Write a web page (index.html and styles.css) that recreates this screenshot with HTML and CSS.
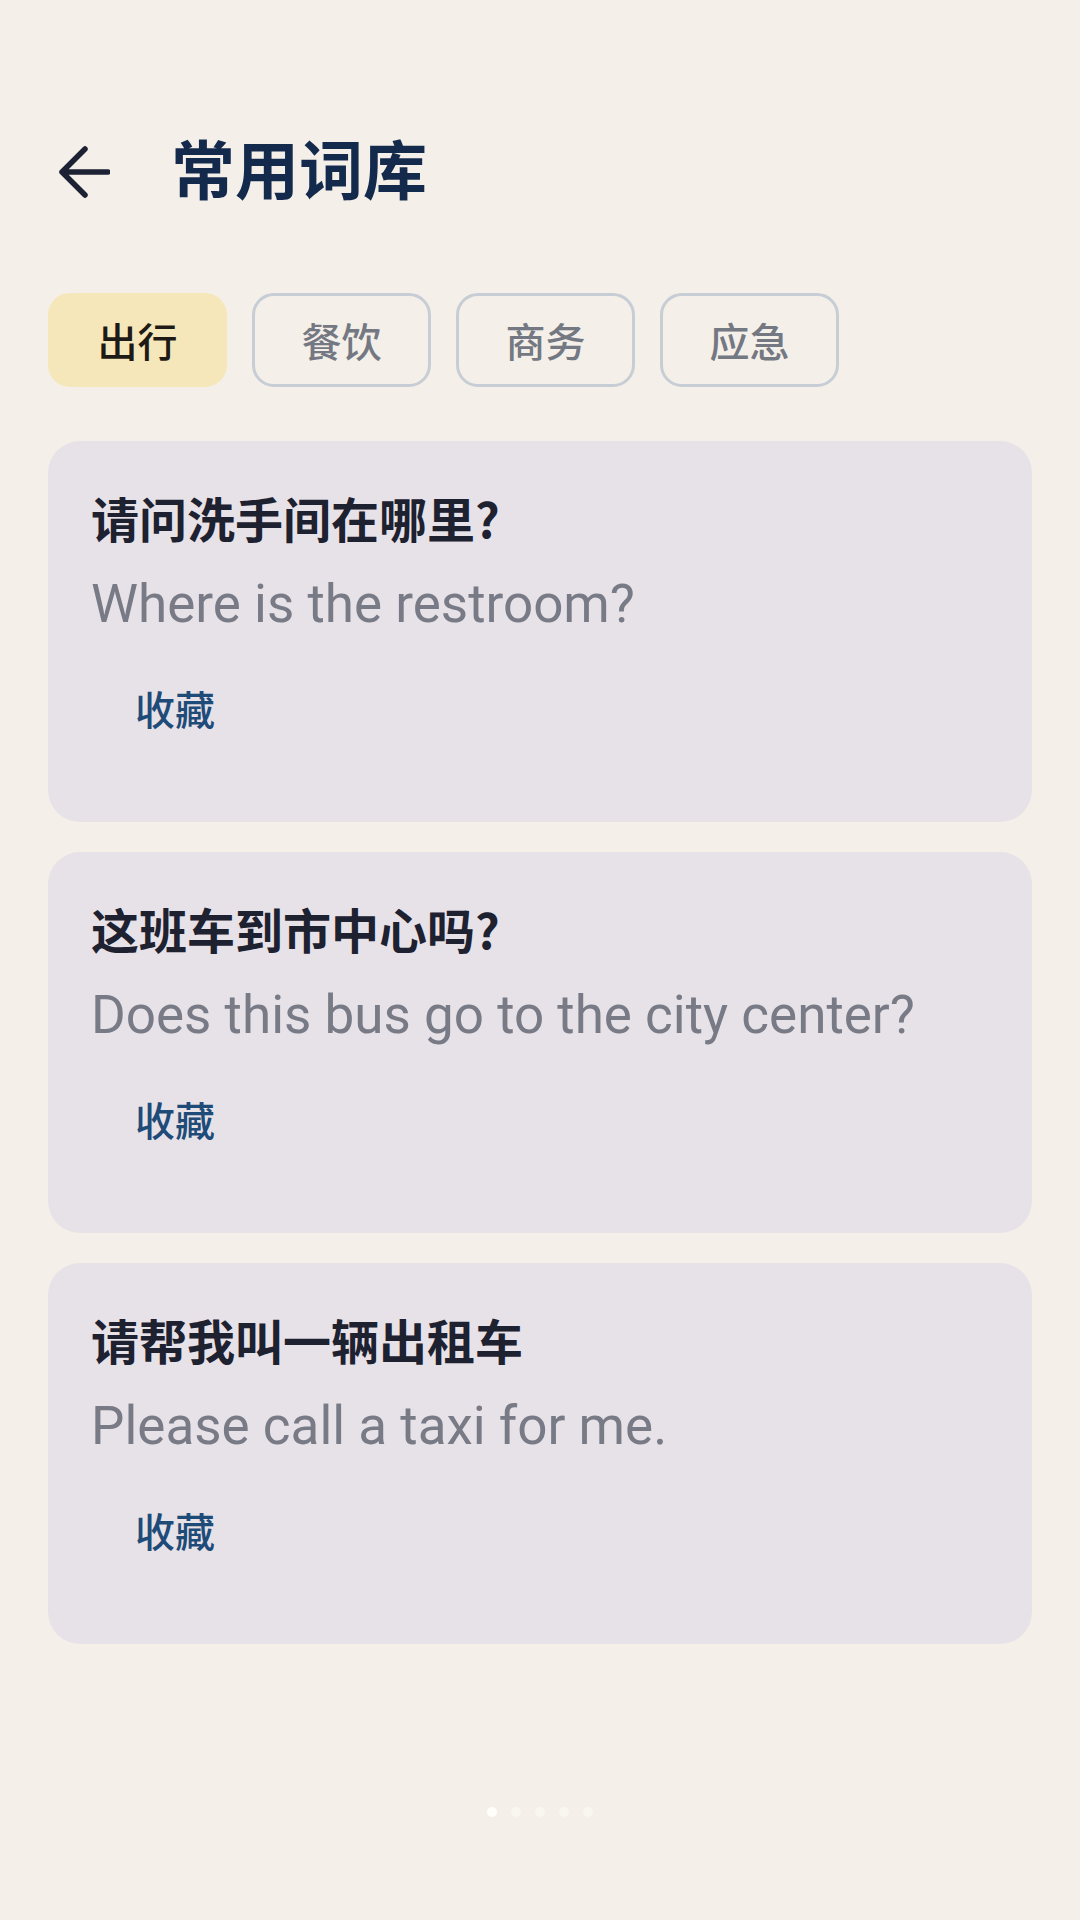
FILE: index.html
```html
<!DOCTYPE html>
<html lang="zh-CN">
<head>
    <meta charset="UTF-8">
    <meta name="viewport" content="width=device-width, initial-scale=1.0">
    <title>常用词库</title>
    <link rel="stylesheet" href="styles.css">
</head>
<body>
    <div class="page">
        <header class="top-bar">
            <button class="back-btn" aria-label="返回">
                <svg viewBox="0 0 52 52" width="52" height="52">
                    <path d="M50 26H4 M27 3 L4 26 L27 49" fill="none" stroke="#1c2233" stroke-width="5.5" stroke-linecap="round" stroke-linejoin="round"/>
                </svg>
            </button>
            <h1 class="title">常用词库</h1>
        </header>

        <nav class="tabs">
            <button class="tab active">出行</button>
            <button class="tab">餐饮</button>
            <button class="tab">商务</button>
            <button class="tab">应急</button>
        </nav>

        <div class="phrase-list">
            <div class="phrase-card">
                <div class="phrase-zh">请问洗手间在哪里?</div>
                <div class="phrase-en">Where is the restroom?</div>
                <button class="fav-btn">收藏</button>
            </div>
            <div class="phrase-card">
                <div class="phrase-zh">这班车到市中心吗?</div>
                <div class="phrase-en">Does this bus go to the city center?</div>
                <button class="fav-btn">收藏</button>
            </div>
            <div class="phrase-card">
                <div class="phrase-zh">请帮我叫一辆出租车</div>
                <div class="phrase-en">Please call a taxi for me.</div>
                <button class="fav-btn">收藏</button>
            </div>
        </div>

        <div class="dots">
            <span class="dot current"></span>
            <span class="dot"></span>
            <span class="dot"></span>
            <span class="dot"></span>
            <span class="dot"></span>
        </div>
    </div>
</body>
</html>
```

FILE: styles.css
```css
body {
    margin: 0;
    background-color: #f4f0e9;
    font-family: Roboto, "Noto Sans CJK SC", sans-serif;
}
.page {
    width: 1080px;
    height: 1920px;
    padding: 0 48px;
    box-sizing: border-box;
    display: flex;
    flex-direction: column;
}
.top-bar {
    display: flex;
    align-items: center;
    padding-top: 126px;
    height: 80px;
}
.back-btn {
    border: none;
    background: none;
    padding: 0;
    margin-left: 10px;
    width: 52px;
    height: 52px;
    display: flex;
    margin-top: 12px;
}
.title {
    margin: 0 0 0 61px;
    font-family: "Noto Sans CJK SC", sans-serif;
    font-size: 64px;
    line-height: 80px;
    font-weight: 700;
    color: #142a4c;
}
.tabs {
    display: flex;
    gap: 25px;
    margin-top: 87px;
}
.tab {
    width: 179px;
    height: 94px;
    border: 3px solid #c7cdd5;
    border-radius: 22px;
    background: transparent;
    font-family: "Noto Sans CJK SC", sans-serif;
    font-size: 40px;
    font-weight: 500;
    color: #747882;
    padding: 0;
}
.tab.active {
    background-color: #f5e7b9;
    border-color: #f5e7b9;
    color: #1e1a15;
}
.phrase-list {
    display: flex;
    flex-direction: column;
    gap: 30px;
    margin-top: 54px;
}
.phrase-card {
    background-color: #e7e2e8;
    border-radius: 32px;
    padding: 45px 43px 70px;
    display: flex;
    flex-direction: column;
    align-items: flex-start;
}
.phrase-zh {
    font-family: "Noto Sans CJK SC", sans-serif;
    font-size: 48px;
    line-height: 62px;
    font-weight: 700;
    color: #1d2130;
}
.phrase-en {
    margin-top: 24px;
    font-size: 53px;
    line-height: 64px;
    color: #787b86;
}
.fav-btn {
    margin-top: 28px;
    border: none;
    background: none;
    padding: 24px 44px;
    font-family: "Noto Sans CJK SC", sans-serif;
    font-size: 40px;
    line-height: 40px;
    font-weight: 500;
    color: #1e4b78;
}
.dots {
    display: flex;
    justify-content: center;
    gap: 14px;
    margin-top: 163px;
}
.dot {
    width: 10px;
    height: 10px;
    border-radius: 50%;
    background-color: #f9f6ef;
}
.dot.current {
    background-color: #fffefa;
}
```
